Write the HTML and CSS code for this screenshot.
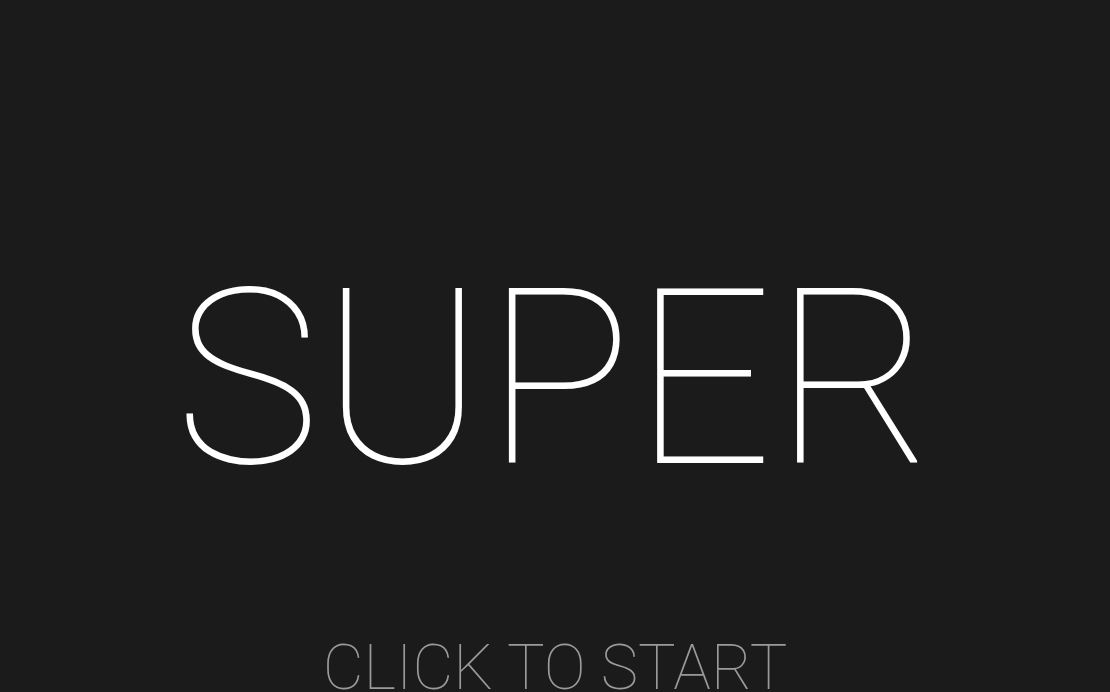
FILE: index.html
```html
<!DOCTYPE html>
<html lang="en">
<head>
<meta charset="utf-8">
<title>Super</title>
<link rel="stylesheet" href="styles.css">
</head>
<body>
<main class="screen">
  <h1 class="title">SUPER</h1>
  <div class="start">CLICK TO START</div>
</main>
</body>
</html>
```

FILE: styles.css
```css
html, body {
  margin: 0;
  padding: 0;
  background: #1b1b1b;
}
.screen {
  height: 692px;
  overflow: hidden;
  display: flex;
  flex-direction: column;
  align-items: center;
  padding-top: 257px;
  box-sizing: border-box;
  font-family: Roboto, "Liberation Sans", sans-serif;
  font-weight: 100;
}
.title {
  margin: 0;
  font-size: 245px;
  line-height: 1;
  font-weight: 100;
  color: #ffffff;
  letter-spacing: 1px;
}
.start {
  margin-top: 134px;
  font-size: 63px;
  line-height: 1;
  color: #9a9a9a;
  white-space: nowrap;
}
```
